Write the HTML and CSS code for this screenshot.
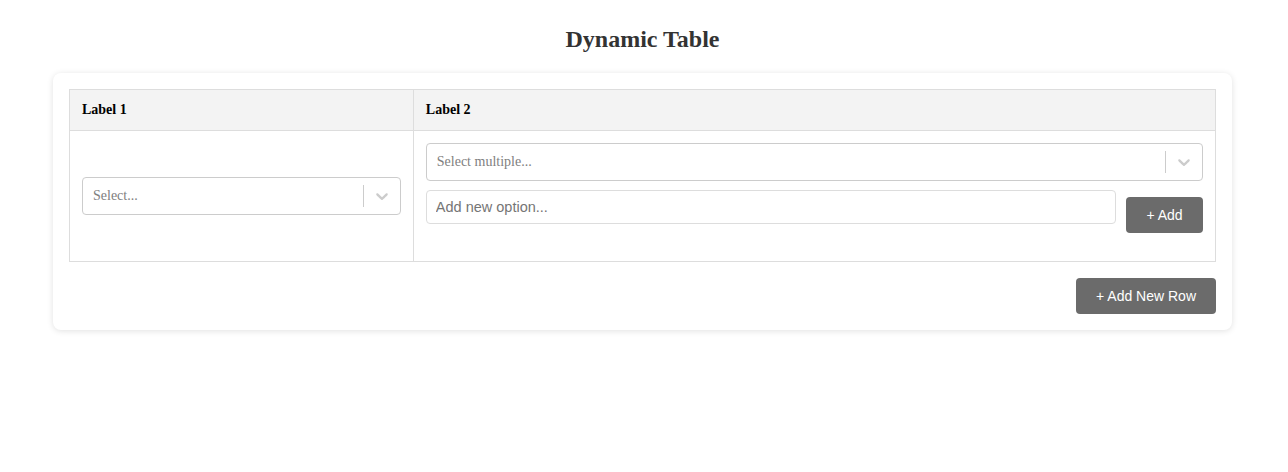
FILE: index.html
```html
<!DOCTYPE html>
<html>
<head>
<meta charset="utf-8">
<link rel="stylesheet" href="styles.css">
</head>
<body>
<h1 class="title">Dynamic Table</h1>
<div class="card">
  <table class="grid">
    <thead>
      <tr><th class="col1">Label 1</th><th>Label 2</th></tr>
    </thead>
    <tbody>
      <tr>
        <td class="col1">
          <div class="select">
            <span class="placeholder">Select...</span>
            <span class="sep"></span>
            <svg class="chev" width="20" height="20" viewBox="0 0 20 20"><path d="M4.516 7.548c0.436-0.446 1.043-0.481 1.576 0l3.908 3.747 3.908-3.747c0.533-0.481 1.141-0.446 1.574 0 0.436 0.445 0.408 1.197 0 1.615-0.406 0.418-4.695 4.502-4.695 4.502-0.217 0.223-0.502 0.335-0.787 0.335s-0.57-0.112-0.789-0.335c0 0-4.287-4.084-4.695-4.502s-0.436-1.170 0-1.615z" fill="currentColor"/></svg>
          </div>
        </td>
        <td>
          <div class="select multi">
            <span class="placeholder">Select multiple...</span>
            <span class="sep"></span>
            <svg class="chev" width="20" height="20" viewBox="0 0 20 20"><path d="M4.516 7.548c0.436-0.446 1.043-0.481 1.576 0l3.908 3.747 3.908-3.747c0.533-0.481 1.141-0.446 1.574 0 0.436 0.445 0.408 1.197 0 1.615-0.406 0.418-4.695 4.502-4.695 4.502-0.217 0.223-0.502 0.335-0.787 0.335s-0.57-0.112-0.789-0.335c0 0-4.287-4.084-4.695-4.502s-0.436-1.170 0-1.615z" fill="currentColor"/></svg>
          </div>
          <div class="addrow">
            <input class="opt" type="text" placeholder="Add new option...">
            <button class="btn add">+ Add</button>
          </div>
        </td>
      </tr>
    </tbody>
  </table>
  <div class="footer">
    <button class="btn">+ Add New Row</button>
  </div>
</div>
</body>
</html>
```
FILE: styles.css
```css
html, body {
  margin: 0;
  padding: 0;
  background: #fff;
}
body {
  font-family: "Liberation Serif", "Times New Roman", serif;
  padding: 20px 56px 20px 53px;
}
.title {
  margin: 5px 0 20px;
  text-align: center;
  font-size: 24px;
  line-height: 28px;
  font-weight: bold;
  color: #333;
}
.card {
  background: #fff;
  border-radius: 8px;
  box-shadow: 0 1px 6px rgba(0, 0, 0, 0.12);
  padding: 16px;
}
.grid {
  width: 100%;
  border-collapse: collapse;
}
.grid th, .grid td {
  border: 1px solid #ddd;
  padding: 12px;
  text-align: left;
  vertical-align: middle;
}
.grid th {
  background: #f3f3f3;
  font-size: 14px;
  line-height: 16px;
  font-weight: bold;
  color: #000;
}
.col1 {
  width: 30%;
}
.select {
  display: flex;
  align-items: center;
  height: 38px;
  box-sizing: border-box;
  border: 1px solid #ccc;
  border-radius: 4px;
  background: #fff;
  padding-left: 10px;
}
.placeholder {
  flex: 1;
  font-size: 14px;
  color: #808080;
}
.sep {
  width: 1px;
  height: 22px;
  background: #ccc;
}
.chev {
  color: #ccc;
  padding: 0 8px;
}
.multi {
  margin-bottom: 9px;
}
.addrow {
  display: flex;
  align-items: flex-start;
  gap: 10px;
  padding-bottom: 16px;
}
.opt {
  flex: 1;
  height: 34px;
  box-sizing: border-box;
  border: 1px solid #ddd;
  border-radius: 4px;
  padding: 0 9px;
  font-family: "Liberation Sans", Arial, sans-serif;
  font-size: 14.5px;
  color: #333;
  outline: none;
}
.opt::placeholder {
  color: #757575;
}
.btn {
  height: 36px;
  border: none;
  border-radius: 4px;
  background: #6b6b6b;
  color: #fff;
  font-family: "Liberation Sans", Arial, sans-serif;
  font-size: 14px;
  padding: 0 20px;
}
.add {
  margin-top: 7px;
  width: 77px;
  padding: 0;
}
.footer {
  display: flex;
  justify-content: flex-end;
  margin-top: 16px;
}
.footer .btn {
  width: 140px;
  padding: 0;
}
```
